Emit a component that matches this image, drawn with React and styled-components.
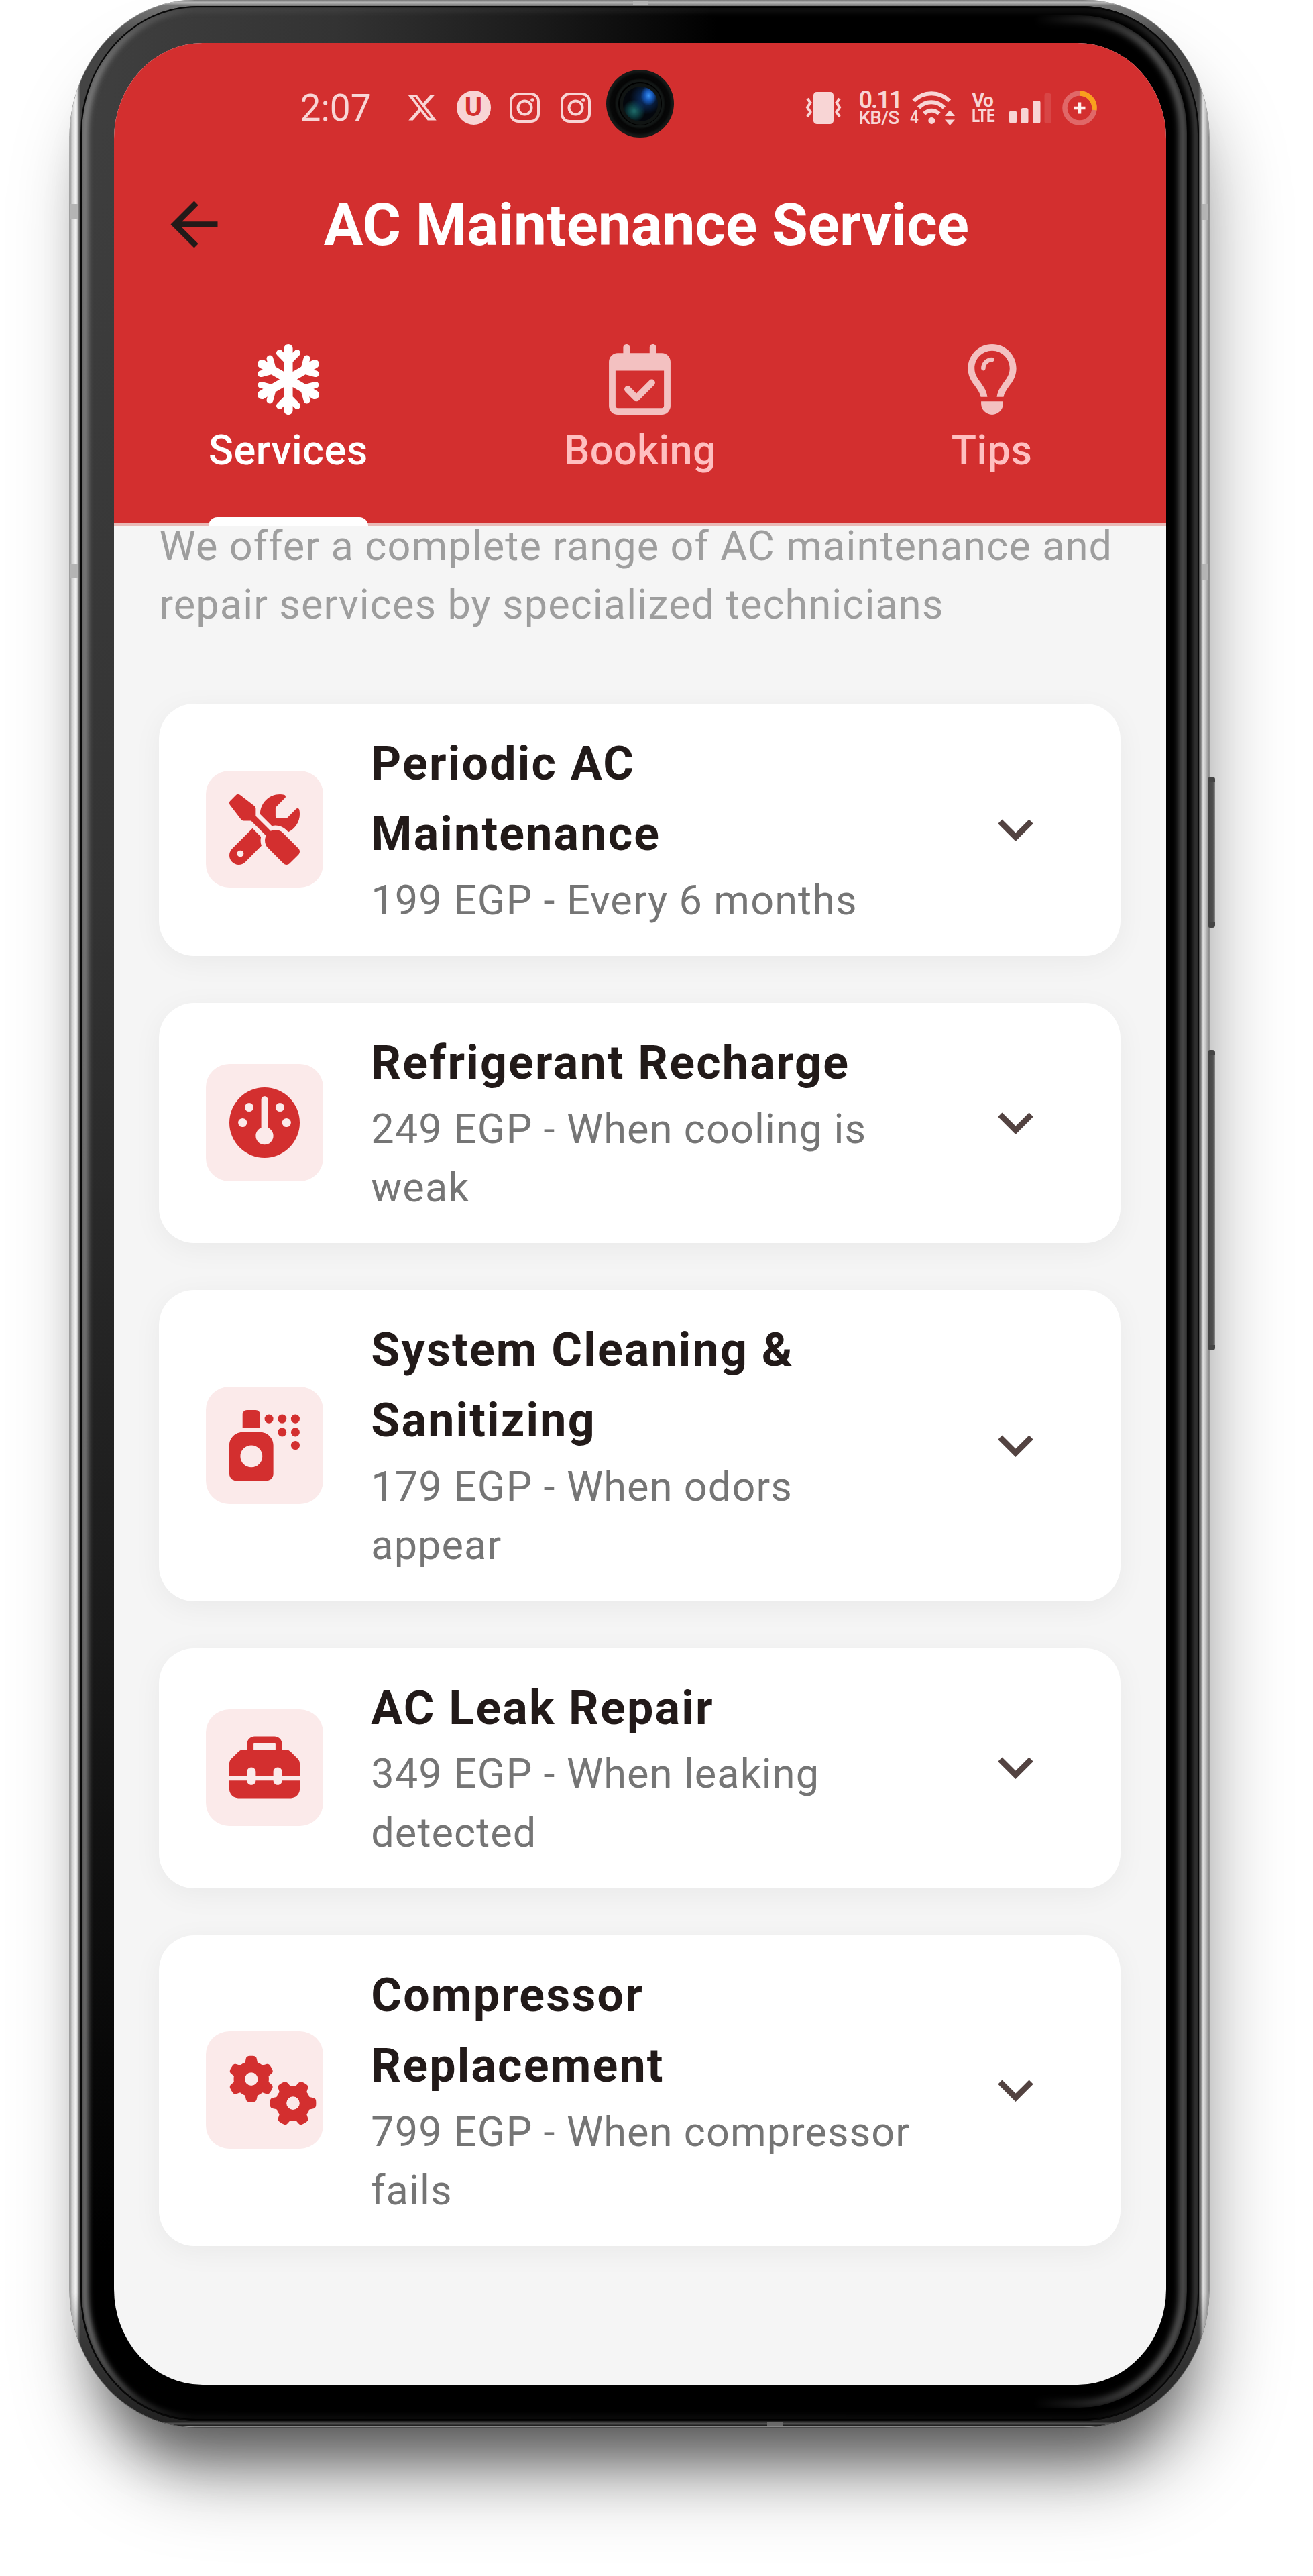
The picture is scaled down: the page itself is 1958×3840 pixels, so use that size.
import React from "react";
import styled, { createGlobalStyle } from "styled-components";
import {
  FaSnowflake,
  FaRegCalendarCheck,
  FaRegLightbulb,
  FaScrewdriverWrench,
  FaGauge,
  FaSprayCan,
  FaToolbox,
  FaGears,
  FaXTwitter,
} from "react-icons/fa6";

const dp = (n) => `${n * 4.372}px`;
const RED = "#d32f2f";
const STATUS = "#f8d5d5";

const GlobalStyle = createGlobalStyle`
  * { box-sizing: border-box; }
  body { margin: 0; background: #fff; font-family: Roboto, "Liberation Sans", sans-serif; }
  svg { display: block; flex: none; overflow: visible; }
`;

const Page = styled.main`
  width: 1958px;
  height: 3840px;
  padding-left: 104px;
  overflow: hidden;
  background: #fff;
`;

const Phone = styled.div`
  position: relative;
  width: 1699px;
  height: 3618px;
  padding: 9px 15px 9px 16px;
  border-radius: 187px / 204px;
  background:
    linear-gradient(180deg, #777 0, #bbb 4px, #777 8px, transparent 60px),
    linear-gradient(0deg, #888 0, #888 1px, #151515 2px, #555 5px, #222 8px, transparent 200px),
    linear-gradient(90deg, #888 0, #ccc 3px, #f3f3f3 9px, #ddd 11px, #888 13px, #444 16px, #444 1683px, #666 1686px, #e2e2e2 1690px, #ccc 1693px, #888 1699px);
  box-shadow:
    0 90px 80px -50px rgba(0, 0, 0, 0.48),
    16px 90px 120px -20px rgba(0, 0, 0, 0.36),
    0 0 0 0.5px #777;
`;

const Bezel = styled.div`
  position: relative;
  height: 100%;
  padding: 55px 49px 54px 50px;
  border-radius: 174px / 190px;
  overflow: hidden;
  background: radial-gradient(ellipse 950px 3350px at 0 0, #404040 0, #333 40%, #1c1c1c 70%, #000 100%) #000;

  &::before,
  &::after {
    content: "";
    position: absolute;
    pointer-events: none;
  }
  &::before {
    inset: 14px 18px 20px 14px;
    border: 12px solid #555;
    border-radius: 160px / 174px;
    filter: blur(5px);
    mask-image: linear-gradient(90deg, transparent 86%, #000 97%);
  }
  &::after {
    inset: 3px 1px 3px 2px;
    border: solid #8c8c8c;
    border-width: 5px 7px 3px 9px;
    border-radius: 170px / 187px;
    filter: blur(4px);
    mask-image: linear-gradient(90deg, #000 0, rgba(0, 0, 0, 0.25) 10%, rgba(0, 0, 0, 0.2) 90%, rgba(0, 0, 0, 0.6) 100%);
  }
`;

const Seam = styled.div`
  position: absolute;
  inset: 9px 15px 9px 16px;
  border: 2px solid #080808;
  border-radius: 174px / 190px;
  pointer-events: none;
`;

const Antenna = styled.i`
  position: absolute;
  left: ${(p) => p.$x}px;
  top: ${(p) => p.$y}px;
  width: ${(p) => p.$w}px;
  height: ${(p) => p.$h}px;
  background: ${(p) => p.$c || "#b4b4b4"};
`;

const SideButton = styled.i`
  position: absolute;
  left: 1698px;
  top: ${(p) => p.$top}px;
  width: 10px;
  height: ${(p) => p.$height}px;
  border-radius: 2px 4px 4px 2px;
  background: linear-gradient(90deg, #444, #505050 70%, #888);
  border: solid #444;
  border-width: 8px 0;
`;

const Screen = styled.div`
  position: relative;
  z-index: 1;
  width: 1569px;
  height: 100%;
  overflow: hidden;
  border-radius: 132px / 143px;
  background: #f5f5f5;
`;

const AppFrame = styled.div`
  width: ${dp(360)};
  margin-left: -2.5px;
`;

const Header = styled.header`
  position: relative;
  z-index: 1;
  height: 720px;
  background: ${RED};
  border-bottom: 4px solid #e9bab7;
`;

const StatusBar = styled.div`
  display: flex;
  align-items: center;
  height: 148px;
  padding: 45px 105px 0 280px;
  color: ${STATUS};
`;

const Clock = styled.span`
  width: 158px;
  font-size: 55px;
  line-height: 50px;
`;

const StatusIcons = styled.div`
  display: flex;
  align-items: center;
  gap: 31px;
`;

const AppBadge = styled.span`
  width: 51px;
  height: 51px;
  margin: 0 -3px;
  border-radius: 50%;
  background: ${STATUS};
  color: ${RED};
  font-size: 40px;
  font-weight: 700;
  line-height: 50px;
  text-align: center;
`;

const SystemIcons = styled.div`
  display: flex;
  align-items: center;
  margin-left: auto;
`;

const NetSpeed = styled.span`
  display: flex;
  flex-direction: column;
  width: 61px;
  margin: 1px 16px 0 26px;
  font-weight: 600;
  white-space: nowrap;
`;

const SpeedValue = styled.span`
  font-size: 36px;
  line-height: 28px;
  letter-spacing: -2px;
`;

const SpeedUnit = styled.span`
  font-size: 28px;
  font-weight: 500;
  line-height: 25px;
  letter-spacing: -0.8px;
`;

const Volte = styled.span`
  display: flex;
  flex-direction: column;
  width: 33px;
  margin: 0 23px 0 25px;
  font-size: 28px;
  font-weight: 700;
  line-height: 23px;
  letter-spacing: -1px;
  white-space: nowrap;
`;

const VolteBottom = styled.span`
  transform: scaleX(0.8);
  transform-origin: left;
`;

const SignalGroup = styled.span`
  display: flex;
  align-items: center;
  gap: 16px;
`;

const Camera = styled.div`
  position: absolute;
  left: 734px;
  top: 40px;
  z-index: 2;
  display: grid;
  place-items: center;
  width: 101px;
  height: 101px;
  border-radius: 50%;
  background: radial-gradient(circle, #000 0 32px, #121615 33px 35px, #050505 38px, #070808 44px, #151817 48px);
`;

const Lens = styled.div`
  width: 52px;
  height: 52px;
  border-radius: 50%;
  background:
    radial-gradient(ellipse 12px 15px at 74% 26%, #3b93f5 0, #1656b5 50%, transparent 100%),
    radial-gradient(circle 24px at 66% 34%, #0d3878 0, transparent 100%),
    radial-gradient(circle 17px at 32% 70%, #1f6c6a 0, #0d3d40 50%, transparent 100%),
    #04070d;
  box-shadow: 0 0 0 5px #101413;
`;

const Toolbar = styled.div`
  display: flex;
  align-items: center;
  height: ${dp(56)};
`;

const BackButton = styled.span`
  display: grid;
  place-items: center;
  width: ${dp(56)};
  color: #221a19;
`;

const ScreenTitle = styled.h1`
  flex: 1;
  margin: 0;
  padding: 1px 226px 0 0;
  color: #fff;
  font-size: 87.4px;
  font-weight: 700;
  line-height: 110px;
  text-align: center;
  white-space: nowrap;
`;

const TabBar = styled.nav`
  display: grid;
  grid-template-columns: repeat(3, 1fr);
  height: 327px;
`;

const Tab = styled.div`
  display: flex;
  flex-direction: column;
  align-items: center;
  padding-top: 56px;
  color: ${(p) => (p.$active ? "#fff" : "#f3c1c1")};
`;

const Glyph = styled.span`
  svg {
    width: ${(p) => p.$width || 105}px;
    height: 105px;
  }
`;

const TabLabel = styled.span`
  position: relative;
  height: 156px;
  margin-top: 10px;
  font-size: 61.2px;
  font-weight: 500;
  line-height: ${dp(20)};
  letter-spacing: 0.44px;
  color: ${(p) => (p.$active ? "#fff" : "#ffbfc0")};

  &::after {
    content: "";
    position: absolute;
    left: 0;
    right: 0;
    bottom: 0;
    height: ${(p) => (p.$active ? "13px" : "0")};
    border-radius: 13px 13px 0 0;
    background: #fff;
  }
`;

const Body = styled.section`
  margin-top: -13.5px;
  padding: 0 ${dp(16)};
`;

const Intro = styled.p`
  margin: 0 0 103.5px;
  color: #9e9e9e;
  font-size: 61.2px;
  line-height: ${dp(20)};
  letter-spacing: 1.12px;
  white-space: pre;
`;

const CardList = styled.div`
  display: flex;
  flex-direction: column;
  gap: ${dp(16)};
`;

const Card = styled.article`
  display: flex;
  align-items: center;
  padding: 37px ${dp(24)} 38.7px ${dp(16)};
  border-radius: ${dp(12)};
  background: #fff;
  box-shadow: 0 9px 44px rgba(0, 0, 0, 0.05);
`;

const IconTile = styled.div`
  display: flex;
  align-items: center;
  width: ${dp(40)};
  height: ${dp(40)};
  margin-right: 71px;
  padding-left: ${dp(8)};
  border-radius: ${dp(8)};
  background: #fbeaea;
  color: ${RED};
`;

const CardText = styled.div`
  display: flex;
  flex: 1;
  flex-direction: column;
  gap: 3px;
  white-space: pre;
`;

const CardTitle = styled.h2`
  margin: 0;
  color: #221a19;
  font-size: 69.9px;
  font-weight: 700;
  line-height: ${dp(24)};
  letter-spacing: 2.22px;
`;

const CardPrice = styled.p`
  margin: 0;
  color: #757575;
  font-size: 61.2px;
  line-height: ${dp(20)};
  letter-spacing: 1.1px;
`;

const Instagram = () => (
  <svg width="45" height="45" viewBox="0 0 45 45" fill="none" stroke={STATUS} strokeWidth="4">
    <rect x="2" y="2" width="41" height="41" rx="11" />
    <circle cx="22.5" cy="22.5" r="10" />
    <circle cx="34" cy="11" r="2.8" fill={STATUS} stroke="none" />
  </svg>
);

const Vibrate = () => (
  <svg width="52" height="50" viewBox="0 0 52 50" fill="none" stroke={STATUS} strokeWidth="4">
    <rect x="11" y="1" width="30" height="48" rx="5" fill={STATUS} stroke="none" />
    <path d="M2 11 6.500 17 2 24 6.500 31 2 38M50 11l-4.500 6L50 24l-4.500 7 4.500 7" />
  </svg>
);

const Wifi = () => (
  <svg width="67" height="52" viewBox="0 0 67 52" fill="none" stroke={STATUS} strokeWidth="6">
    <path d="M5.500 15.500C20 .5 44 .5 59 15.500M13 25.500c10.500-11 27-11 38 0M21 34.500c6.500-6.500 16-6.500 22.500 0" />
    <circle cx="32.300" cy="45" r="5" fill={STATUS} stroke="none" />
    <path d="M52 38 59.500 29 67 38ZM52 43.500h15L59.500 52Z" fill={STATUS} stroke="none" />
    <text x="0" y="49" fontSize="27" fontWeight="500" fontFamily="Roboto, sans-serif" fill={STATUS} stroke="none" textLength="13" lengthAdjust="spacingAndGlyphs">4</text>
  </svg>
);

const Signal = () => (
  <svg width="63" height="46" viewBox="0 0 63 46" fill={STATUS}>
    <rect x="0" y="27" width="11" height="19" rx="3" />
    <rect x="17.500" y="23" width="11" height="23" rx="3" />
    <rect x="35.500" y="12" width="11" height="34" rx="3" />
    <rect x="52.500" y="1" width="10" height="45" rx="3" opacity=".14" />
  </svg>
);

const Battery = () => (
  <svg width="52" height="52" viewBox="0 0 52 52" fill="none">
    <circle cx="26" cy="26" r="22" stroke="#e06868" strokeWidth="7.500" />
    <path d="M26 4a22 22 0 0 1 21.800 25" stroke="#f9a11d" strokeWidth="7.500" />
    <path d="M26 17.500v17M17.500 26h17" stroke="#fff0ee" strokeWidth="4.500" />
  </svg>
);

const BackArrow = () => (
  <svg width="105" height="105" viewBox="0 0 24 24" fill="currentColor">
    <path d="M20 11H7.830l5.590-5.590L12 4l-8 8 8 8 1.410-1.410L7.830 13H20z" />
  </svg>
);

const Chevron = () => (
  <svg width="105" height="105" viewBox="0 0 24 24" fill="#534341">
    <path d="M16.590 8.590 12 13.170 7.410 8.590 6 10l6 6 6-6z" />
  </svg>
);

const tabs = [
  { label: "Services", Icon: FaSnowflake, width: 92 },
  { label: "Booking", Icon: FaRegCalendarCheck, width: 92 },
  { label: "Tips", Icon: FaRegLightbulb, width: 79 },
];

const services = [
  { title: "Periodic AC\nMaintenance", price: "199 EGP - Every 6 months", Icon: FaScrewdriverWrench },
  { title: "Refrigerant Recharge", price: "249 EGP - When cooling is\nweak", Icon: FaGauge },
  { title: "System Cleaning &\nSanitizing", price: "179 EGP - When odors\nappear", Icon: FaSprayCan },
  { title: "AC Leak Repair", price: "349 EGP - When leaking\ndetected", Icon: FaToolbox },
  { title: "Compressor\nReplacement", price: "799 EGP - When compressor\nfails", Icon: FaGears, width: 131 },
];

export default function App() {
  return (
    <Page>
      <GlobalStyle />
      <Phone>
        <Bezel>
          <Screen>
            <AppFrame>
              <Header>
                <StatusBar>
                  <Clock>2:07</Clock>
                  <StatusIcons>
                    <FaXTwitter size={47} />
                    <AppBadge>U</AppBadge>
                    <Instagram />
                    <Instagram />
                  </StatusIcons>
                  <SystemIcons>
                    <Vibrate />
                    <NetSpeed>
                      <SpeedValue>0.11</SpeedValue>
                      <SpeedUnit>KB/S</SpeedUnit>
                    </NetSpeed>
                    <Wifi />
                    <Volte>
                      <span>Vo</span>
                      <VolteBottom>LTE</VolteBottom>
                    </Volte>
                    <SignalGroup>
                      <Signal />
                      <Battery />
                    </SignalGroup>
                  </SystemIcons>
                </StatusBar>
                <Toolbar>
                  <BackButton><BackArrow /></BackButton>
                  <ScreenTitle>AC Maintenance Service</ScreenTitle>
                </Toolbar>
                <TabBar>
                  {tabs.map(({ label, Icon, width }, i) => (
                    <Tab key={label} $active={i === 0}>
                      <Glyph $width={width}><Icon /></Glyph>
                      <TabLabel $active={i === 0}>{label}</TabLabel>
                    </Tab>
                  ))}
                </TabBar>
              </Header>
              <Body>
                <Intro>{"We offer a complete range of AC maintenance and\nrepair services by specialized technicians"}</Intro>
                <CardList>
                  {services.map(({ title, price, Icon, width }) => (
                    <Card key={title}>
                      <IconTile>
                        <Glyph $width={width}><Icon /></Glyph>
                      </IconTile>
                      <CardText>
                        <CardTitle>{title}</CardTitle>
                        <CardPrice>{price}</CardPrice>
                      </CardText>
                      <Chevron />
                    </Card>
                  ))}
                </CardList>
              </Body>
            </AppFrame>
            <Camera><Lens /></Camera>
          </Screen>
        </Bezel>
        <Seam />
        <Antenna $x={840} $y={1} $w={22} $h={7} />
        <Antenna $x={1040} $y={3611} $w={23} $h={6} $c="#6a6a6a" />
        <Antenna $x={1} $y={304} $w={11} $h={22} />
        <Antenna $x={1} $y={840} $w={11} $h={22} />
        <Antenna $x={1688} $y={304} $w={10} $h={24} />
        <Antenna $x={1688} $y={840} $w={10} $h={24} />
        <SideButton $top={1158} $height={225} />
        <SideButton $top={1565} $height={448} />
      </Phone>
    </Page>
  );
}
